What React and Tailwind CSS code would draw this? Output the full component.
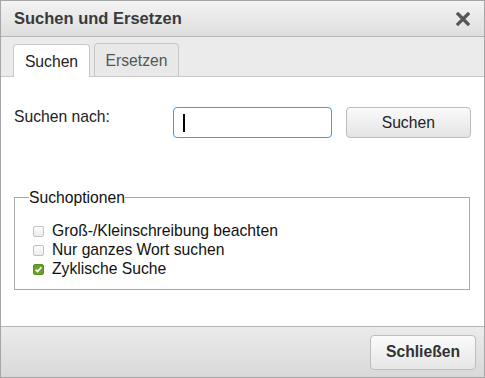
import React from 'react';

const Checkbox = ({ checked, label }) => (
    <label className="flex items-center h-[19px]">
        <span
            className={
                checked
                    ? 'w-[11px] h-[11px] rounded-[2px] bg-[#6aa12b] border border-[#5a8f22] flex items-center justify-center'
                    : 'w-[11px] h-[11px] rounded-[2px] bg-gradient-to-b from-[#fdfdfd] to-[#ececec] border border-[#c2c2c2]'
            }
        >
            {checked && (
                <svg width="9" height="9" viewBox="0 0 9 9">
                    <path d="M1.6 4.6 L3.6 6.6 L7.4 2.2" fill="none" stroke="#fff" strokeWidth="1.7" />
                </svg>
            )}
        </span>
        <span className="ml-[8px] text-[#111]">{label}</span>
    </label>
);

const App = () => {
    return (
        <div className="w-[485px] h-[378px] flex flex-col border border-[#a6a6a6] font-['Liberation_Sans',Arial,sans-serif] text-[15.7px] text-[#222]">
            {/* title bar */}
            <div className="h-[36px] shrink-0 flex items-center justify-between pl-[13px] pr-[14px] bg-gradient-to-b from-[#f3f3f3] to-[#dedede] border-b border-[#b5b5b5]">
                <span className="text-[16.5px] font-bold text-[#3a3a3a]">Suchen und Ersetzen</span>
                <svg width="14" height="14" viewBox="0 0 14 14">
                    <path d="M2 2 L12 12 M12 2 L2 12" stroke="#555" strokeWidth="3.2" strokeLinecap="square" />
                </svg>
            </div>

            {/* tabs */}
            <div className="h-[40px] shrink-0 flex items-end gap-[4px] px-[12px] bg-[#ebebeb] border-b border-[#c8c8c8]">
                <div className="h-[33px] w-[77px] -mb-px pt-[1px] flex items-center justify-center bg-white border border-b-0 border-[#c8c8c8] rounded-t-[4px] text-[#222]">
                    Suchen
                </div>
                <div className="h-[33px] w-[85px] pt-[1px] flex items-center justify-center bg-[#e8e8e8] border border-b-0 border-[#c8c8c8] rounded-t-[4px] text-[#555]">
                    Ersetzen
                </div>
            </div>

            {/* content */}
            <div className="flex-1 bg-white px-[13px] pt-[30px]">
                <div className="flex items-start">
                    <span className="w-[160px] leading-[20px]">Suchen nach:</span>
                    <div className="w-[159px] h-[31px] border border-[#3d9be9] rounded-[4px] flex items-center pl-[9px]">
                        <span className="w-[2px] h-[18px] bg-black" />
                    </div>
                    <button className="ml-[14px] w-[126px] h-[31px] border border-[#bcbcbc] rounded-[4px] bg-gradient-to-b from-[#fafafa] to-[#e4e4e4] text-[#222]">
                        Suchen
                    </button>
                </div>

                <fieldset className="mt-[48px] w-[456px] h-[104px] border border-[#a9a9a9] pl-[18px]">
                    <legend className="ml-[-4px] px-0 text-[#111]">Suchoptionen</legend>
                    <div className="mt-[12px]">
                        <Checkbox label="Groß-/Kleinschreibung beachten" />
                        <Checkbox label="Nur ganzes Wort suchen" />
                        <Checkbox checked label="Zyklische Suche" />
                    </div>
                </fieldset>
            </div>

            {/* footer */}
            <div className="h-[51px] shrink-0 flex items-center justify-end pr-[8px] bg-gradient-to-b from-[#ebebeb] to-[#d9d9d9] border-t border-[#b5b5b5]">
                <button className="w-[106px] h-[35px] border border-[#bdbdbd] rounded-[4px] bg-gradient-to-b from-[#fbfbfb] to-[#e6e6e6] font-bold text-[#333]">
                    Schließen
                </button>
            </div>
        </div>
    );
};

export default App;
